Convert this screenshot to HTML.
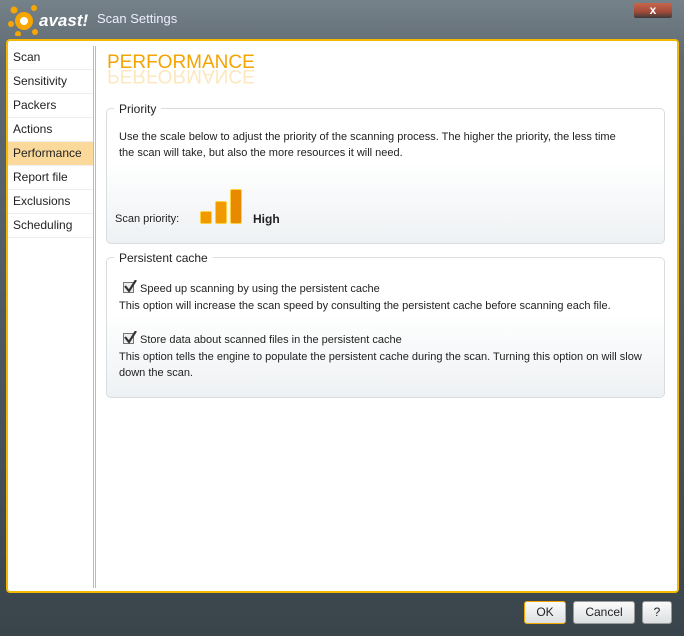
<!DOCTYPE html><html><head><style>
*{margin:0;padding:0;box-sizing:border-box}
body{width:684px;height:636px;overflow:hidden;font-family:"Liberation Sans",sans-serif;font-size:11px;color:#222;background:linear-gradient(#76828a,#5e6971 60px,#49545c 400px,#3a444b);position:relative}
.abs{position:absolute}
.title{left:97px;top:11px;color:#eef;font-size:13px}
.panel{left:6px;top:39px;width:673px;height:554px;background:#fff;border:2px solid #f5b800;border-radius:4px}
.side{left:8px;top:46px;width:85px}
.side div{height:24px;line-height:23px;padding-left:5px;border-bottom:1px solid #eee;font-size:12px}
.side .sel{background:#fbd99a}
.div{left:93px;top:46px;width:3px;height:542px;border-left:1px solid #bbb;border-right:1px solid #bbb}
.h{left:107px;top:52px;font-size:19px;color:#f4a300}
.refl{left:107px;top:64px;font-size:19px;color:#f4a300;transform:scaleY(-1);opacity:.25}
.box{border:1px solid #d8dde0;border-radius:5px;background:linear-gradient(#fff,#fff 40%,#eef1f3)}
.lg{background:#fff;padding:0 5px;font-size:12px;color:#222}
p{font-size:11px;line-height:16px}
.cb{display:inline-block;width:11px;height:11px;border:1px solid #777;background:#eee;vertical-align:-1px;margin-right:6px;position:relative}
.btn{top:601px;height:23px;border:1px solid #999;border-radius:3px;background:linear-gradient(#fbfbfb,#dcdfe1);text-align:center;line-height:21px;font-size:12px}
</style></head><body>
<svg class="abs" style="left:8px;top:4px" width="92" height="32"><circle cx="16" cy="17" r="9" fill="#f7a600"/><circle cx="16" cy="17" r="4" fill="#fff"/><circle cx="6" cy="6" r="3.5" fill="#f7a600"/><circle cx="3" cy="20" r="3" fill="#f7a600"/><circle cx="10" cy="30" r="3" fill="#f7a600"/><circle cx="26" cy="4" r="3" fill="#f7a600"/><circle cx="27" cy="28" r="3" fill="#f7a600"/><text x="31" y="22" fill="#fff" font-size="17" font-weight="bold" font-style="italic" font-family="Liberation Sans">avast!</text></svg>
<div class="abs title">Scan Settings</div>
<div class="abs" style="left:634px;top:3px;width:38px;height:15px;border-radius:2px;background:linear-gradient(#c8654c,#a04a38 60%,#3a3a3a);color:#fff;text-align:center;font-weight:bold;font-size:12px;line-height:14px">x</div>
<div class="abs panel"></div>
<div class="abs side"><div>Scan</div><div>Sensitivity</div><div>Packers</div><div>Actions</div><div class="sel">Performance</div><div>Report file</div><div>Exclusions</div><div>Scheduling</div></div>
<div class="abs div"></div>
<div class="abs h">PERFORMANCE</div>
<div class="abs refl">PERFORMANCE</div>
<div class="abs box" style="left:106px;top:108px;width:559px;height:136px"></div>
<div class="abs lg" style="left:114px;top:102px">Priority</div>
<p class="abs" style="left:119px;top:129px;width:515px">Use the scale below to adjust the priority of the scanning process. The higher the priority, the less time the scan will take, but also the more resources it will need.</p>
<p class="abs" style="left:115px;top:211px">Scan priority:</p>
<div class="abs" style="left:200px;top:211px;width:12px;height:13px;background:#f09a00;border:1px solid #ffd040;border-radius:2px"></div>
<div class="abs" style="left:215px;top:201px;width:12px;height:23px;background:#f09a00;border:1px solid #ffd040;border-radius:2px"></div>
<div class="abs" style="left:230px;top:189px;width:12px;height:35px;background:#e88a00;border:1px solid #ffd040;border-radius:2px"></div>
<p class="abs" style="left:253px;top:211px;font-weight:bold;font-size:12px">High</p>
<div class="abs box" style="left:106px;top:257px;width:559px;height:141px"></div>
<div class="abs lg" style="left:114px;top:251px">Persistent cache</div>
<p class="abs" style="left:123px;top:281px"><span class="cb"><svg class="abs" style="left:0;top:-3px" width="13" height="13"><path d="M1 6l4 5 7-11" stroke="#333" stroke-width="2.2" fill="none"/></svg></span>Speed up scanning by using the persistent cache</p>
<p class="abs" style="left:119px;top:298px">This option will increase the scan speed by consulting the persistent cache before scanning each file.</p>
<p class="abs" style="left:123px;top:332px"><span class="cb"><svg class="abs" style="left:0;top:-3px" width="13" height="13"><path d="M1 6l4 5 7-11" stroke="#333" stroke-width="2.2" fill="none"/></svg></span>Store data about scanned files in the persistent cache</p>
<p class="abs" style="left:119px;top:349px;width:540px">This option tells the engine to populate the persistent cache during the scan. Turning this option on will slow down the scan.</p>
<div class="abs btn" style="left:524px;width:42px;border-color:#f0a800">OK</div>
<div class="abs btn" style="left:573px;width:62px">Cancel</div>
<div class="abs btn" style="left:642px;width:30px">?</div>
</body></html>
